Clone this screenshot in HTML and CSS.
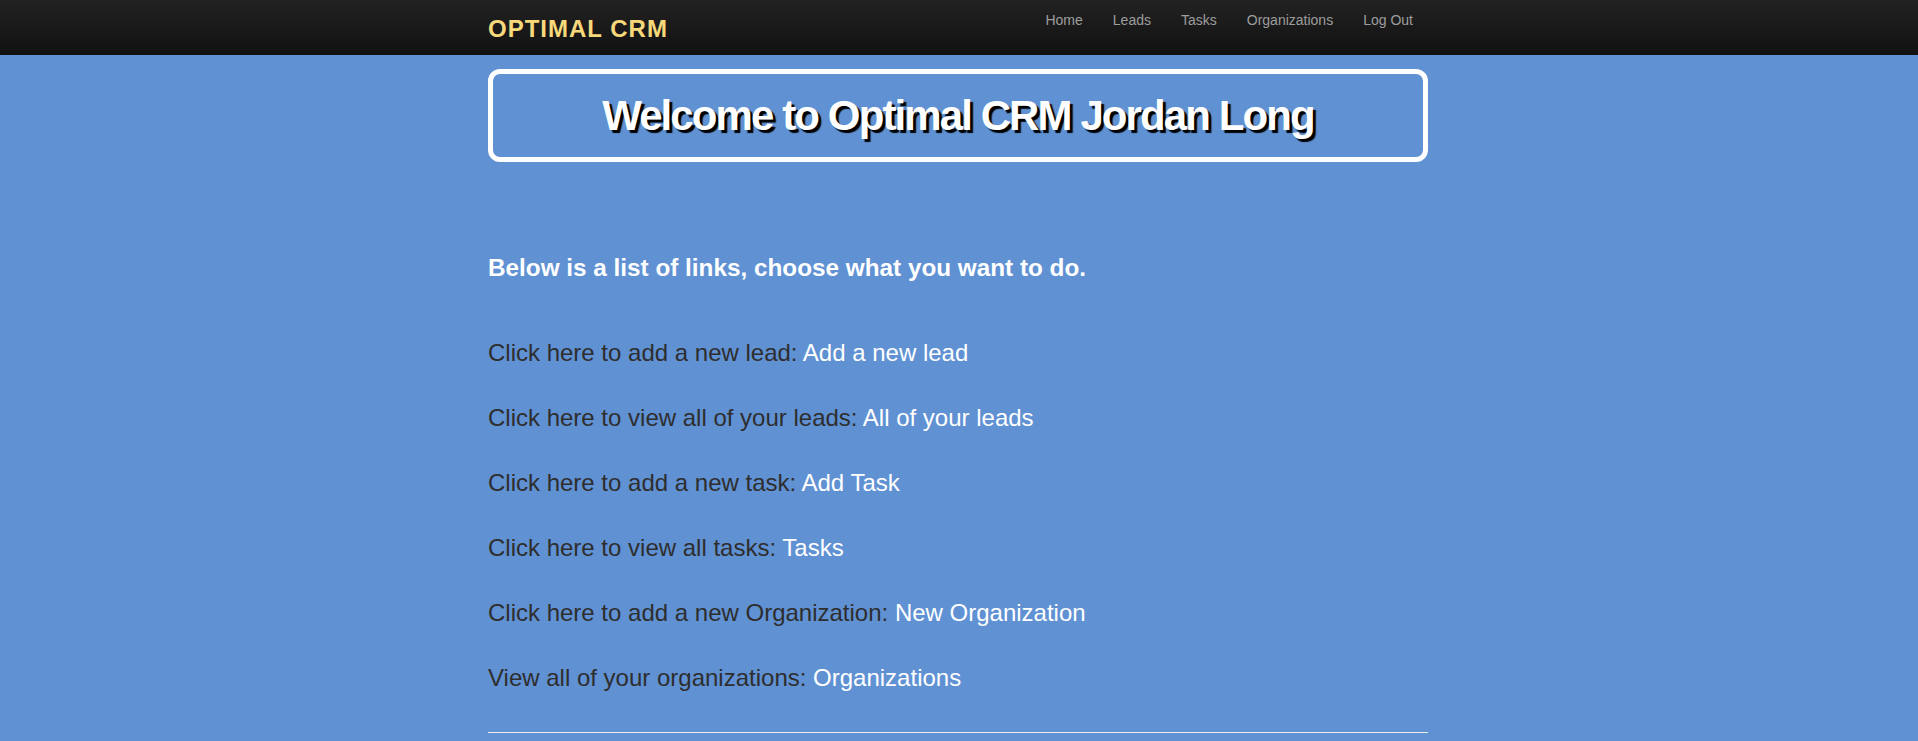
FILE: index.html
```html
<!DOCTYPE html>
<html lang="en">
<head>
<meta charset="utf-8">
<title>Optimal CRM</title>
<link rel="stylesheet" href="styles.css">
</head>
<body>
<header class="navbar">
  <div class="container nav-inner">
    <a class="brand" href="#">OPTIMAL CRM</a>
    <nav class="nav">
      <a href="#">Home</a>
      <a href="#">Leads</a>
      <a href="#">Tasks</a>
      <a href="#">Organizations</a>
      <a href="#">Log Out</a>
    </nav>
  </div>
</header>
<main class="container">
  <div class="welcome">
    <h1>Welcome to Optimal CRM Jordan Long</h1>
  </div>
  <h3 class="intro">Below is a list of links, choose what you want to do.</h3>
  <div class="links">
    <p>Click here to add a new lead: <a href="#">Add a new lead</a></p>
    <p>Click here to view all of your leads: <a href="#">All of your leads</a></p>
    <p>Click here to add a new task: <a href="#">Add Task</a></p>
    <p>Click here to view all tasks: <a href="#">Tasks</a></p>
    <p>Click here to add a new Organization: <a href="#">New Organization</a></p>
    <p>View all of your organizations: <a href="#">Organizations</a></p>
  </div>
  <hr class="rule">
</main>
</body>
</html>
```

FILE: styles.css
```css
html, body {
  margin: 0;
  padding: 0;
}
body {
  background: #6091d3;
  font-family: "Liberation Sans", Arial, Helvetica, sans-serif;
  color: #2e2e2e;
  overflow: hidden;
}
.container {
  width: 940px;
  margin: 0 auto;
  padding-right: 2px;
}
.navbar {
  height: 55px;
  background: linear-gradient(to bottom, #222222, #111111);
}
.nav-inner {
  display: flex;
  justify-content: space-between;
  align-items: flex-start;
  height: 55px;
}
.brand {
  font-size: 24px;
  font-weight: bold;
  letter-spacing: 1px;
  color: #f7d87b;
  text-decoration: none;
  line-height: 30px;
  padding-top: 14px;
}
.nav {
  display: flex;
}
.nav a {
  color: #9d9d9d;
  font-size: 14px;
  line-height: 20px;
  padding: 10px 15px;
  text-decoration: none;
}
.welcome {
  margin-top: 14px;
  border: 5px solid #ffffff;
  border-radius: 12px;
  padding: 17px 0 16px;
  text-align: center;
}
.welcome h1 {
  margin: 0;
  font-size: 42px;
  line-height: 50px;
  font-weight: bold;
  letter-spacing: -1.9px;
  color: #ffffff;
  text-shadow: 3px 3px 1px #000000;
}
.intro {
  margin: 91px 0 0;
  font-size: 24.3px;
  line-height: 30px;
  font-weight: bold;
  color: #ffffff;
}
.links {
  margin-top: 55px;
  display: flex;
  flex-direction: column;
  gap: 35px;
}
.links p {
  margin: 0;
  font-size: 24px;
  line-height: 30px;
}
.links a {
  color: #ffffff;
  text-decoration: none;
}
.rule {
  margin: 39px 0 0;
  border: 0;
  border-top: 1px solid #eeeeee;
  height: 0;
}
```
